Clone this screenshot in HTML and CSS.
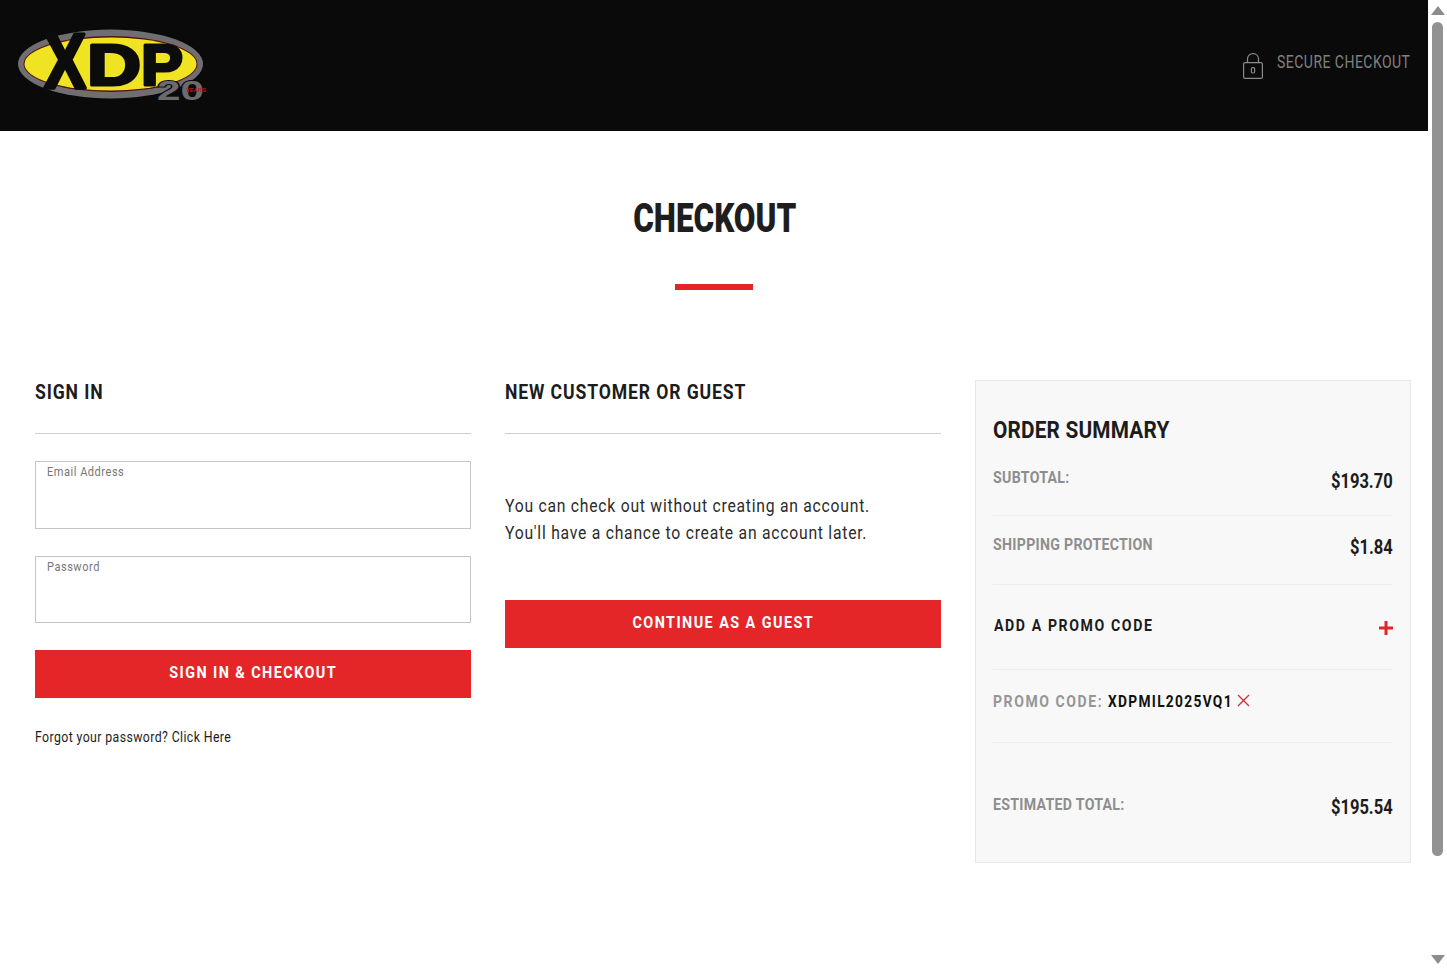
FILE: index.html
```html
<!DOCTYPE html>
<html lang="en">
<head>
<meta charset="utf-8">
<title>Checkout</title>
<link rel="stylesheet" href="styles.css">
</head>
<body>
<div class="window">
  <div class="page">
    <header class="site-header">
      <svg class="logo" width="192" height="76" viewBox="17 26 192 76" role="img" aria-label="XDP 20 years">
        <ellipse cx="110.5" cy="64" rx="92.5" ry="34.5" fill="#6f6f72"/>
        <ellipse cx="110.5" cy="64" rx="87" ry="28" fill="#5a0f12"/>
        <ellipse cx="110.5" cy="64" rx="86" ry="26.5" fill="#efe322"/>
        <text class="logo-x" x="44" y="88" textLength="42" lengthAdjust="spacingAndGlyphs">X</text>
        <text class="logo-dp" x="87" y="85" textLength="54" lengthAdjust="spacingAndGlyphs">D</text>
        <text class="logo-dp" x="141" y="85" textLength="42" lengthAdjust="spacingAndGlyphs">P</text>
        <text class="logo-20" x="157" y="100" textLength="47" lengthAdjust="spacingAndGlyphs">20</text>
        <text class="logo-years" x="186" y="92" textLength="20" lengthAdjust="spacingAndGlyphs">YEARS</text>
      </svg>
      <div class="secure">
        <svg width="20" height="26" viewBox="0 0 20 26" fill="none" stroke="#8a8a8a" stroke-width="1.2" aria-hidden="true">
          <rect x=".6" y="9.6" width="18.8" height="15.8" rx="1.5"/>
          <path d="M4.5 9.5V6C4.5 2.9 6.9.6 10 .6s5.500 2.300 5.500 5.400v3.500"/>
          <rect x="8.400" y="14.600" width="3.200" height="5.400" rx="1.200"/>
        </svg>
        <span class="secure-text">SECURE CHECKOUT</span>
      </div>
    </header>

    <main class="content">
      <div class="title-block">
        <h1 class="title">CHECKOUT</h1>
        <div class="title-rule"></div>
      </div>

      <div class="columns">
        <section class="col">
          <h2 class="col-head"><span>SIGN IN</span></h2>
          <div class="field field-email"><span class="field-label">Email Address</span></div>
          <div class="field field-password"><span class="field-label">Password</span></div>
          <a class="btn btn-signin"><span>SIGN IN &amp; CHECKOUT</span></a>
          <p class="forgot">Forgot your password? Click Here</p>
        </section>

        <section class="col">
          <h2 class="col-head"><span>NEW CUSTOMER OR GUEST</span></h2>
          <p class="guest-copy">You can check out without creating an account.<br>You'll have a chance to create an account later.</p>
          <a class="btn btn-guest"><span>CONTINUE AS A GUEST</span></a>
        </section>

        <aside class="summary">
          <h2 class="summary-title">ORDER SUMMARY</h2>
          <div class="row row-subtotal">
            <span class="row-label">SUBTOTAL:</span><span class="row-value">$193.70</span>
          </div>
          <div class="row row-shipping">
            <span class="row-label">SHIPPING PROTECTION</span><span class="row-value">$1.84</span>
          </div>
          <div class="row row-add">
            <span class="add-label">ADD A PROMO CODE</span>
            <svg class="plus" width="14" height="14" viewBox="0 0 14 14" aria-hidden="true"><path d="M7 0v14M0 7h14" stroke="#e32529" stroke-width="3"/></svg>
          </div>
          <div class="row-promo">
            <span class="promo-label">PROMO CODE:</span>
            <span class="promo-code">XDPMIL2025VQ1</span>
            <svg class="cross" width="13" height="13" viewBox="0 0 13 13" aria-hidden="true"><path d="M1 1l11 11M12 1L1 12" stroke="#c8303a" stroke-width="1.3"/></svg>
          </div>
          <div class="row row-total">
            <span class="row-label">ESTIMATED TOTAL:</span><span class="row-value">$195.54</span>
          </div>
        </aside>
      </div>
    </main>
  </div>

  <div class="scrollbar" aria-hidden="true">
    <span class="arrow-up"></span>
    <span class="thumb"></span>
    <span class="arrow-down"></span>
  </div>
</div>
</body>
</html>
```
FILE: styles.css
```css
* { box-sizing: border-box; }
html, body { margin: 0; height: 100%; }
body {
  background: #fff;
  color: #1c1c1c;
  font-family: "Roboto", "Liberation Sans", sans-serif;
  overflow: hidden;
}
h1, h2, p { margin: 0; font-weight: normal; }

.window { display: flex; height: 970px; }
.page { flex: 1; min-width: 0; }

.site-header {
  height: 131px;
  background: #0a0a0a;
  display: flex;
  align-items: center;
  justify-content: space-between;
  padding: 0 18px 0 17px;
}
.logo { margin-top: -3px; display: block; overflow: visible; }
.logo-x, .logo-dp {
  font-family: "Liberation Sans", sans-serif;
  font-weight: 700;
  fill: #0c0c0c;
  stroke: #0c0c0c;
  stroke-linejoin: round;
}
.logo-x { font-size: 78px; stroke-width: 3.5px; }
.logo-dp { font-size: 58px; stroke-width: 3px; }
.logo-20 {
  font-family: "Liberation Sans", sans-serif;
  font-weight: 700;
  font-size: 28px;
  fill: #6b6b6e;
  stroke: #0a0a0a;
  stroke-width: 2px;
  paint-order: stroke;
}
.logo-years {
  font-family: "Liberation Sans", sans-serif;
  font-weight: 700;
  font-size: 6px;
  fill: #c4161c;
}
.secure {
  display: flex;
  align-items: center;
  color: #808080;
  font-size: 18px;
  letter-spacing: .6px;
}
.secure-text {
  display: inline-block;
  margin: -8px 0 0 -24px;
  transform: scaleX(.778);
  transform-origin: right center;
}

.title-block { display: flex; flex-direction: column; align-items: center; padding-top: 63px; }
.title {
  font-weight: 900;
  font-size: 40px;
  line-height: 50px;
  color: #1e1e1e;
  margin-left: 2px;
  transform: scaleX(.786);
}
.title-rule { width: 78px; height: 6px; background: #e32529; margin-top: 40px; }

.columns {
  display: grid;
  grid-template-columns: 436px 436px 436px;
  column-gap: 34px;
  margin-top: 90px;
  padding-left: 35px;
}
.col-head {
  font-weight: 700;
  font-size: 20px;
  letter-spacing: 1px;
  line-height: 24px;
  color: #1c1c1c;
  border-bottom: 1px solid #cfcfcf;
  height: 54px;
}
.col-head span { display: inline-block; transform: scaleX(.88); transform-origin: left center; }
.field {
  border: 1px solid #c4c4c4;
  padding: 2px 11px;
  font-size: 13px;
  color: #777;
  letter-spacing: .6px;
  line-height: 16px;
}
.field-label { display: inline-block; transform: scaleX(.85); transform-origin: left center; }
.field-email { height: 68px; margin-top: 27px; }
.field-password { height: 67px; margin-top: 27px; }
.btn {
  display: block;
  height: 48px;
  background: #e52629;
  color: #fff;
  font-weight: 700;
  font-size: 17px;
  line-height: 44px;
  letter-spacing: 1.7px;
  text-align: center;
}
.btn span { display: inline-block; transform: scaleX(.847); }
.btn-signin { margin-top: 27px; }
.forgot {
  margin-top: 30px;
  font-size: 14px;
  line-height: 18px;
  letter-spacing: .45px;
  color: #1c1c1c;
  transform: scaleX(.879);
  transform-origin: left center;
}
.guest-copy {
  margin-top: 59px;
  font-size: 17.5px;
  line-height: 27px;
  letter-spacing: .85px;
  color: #2b2b2b;
  transform: scaleX(.897);
  transform-origin: left center;
}
.btn-guest { margin-top: 53px; }

.summary {
  height: 483px;
  background: #f8f8f9;
  border: 1px solid #e8e8e8;
  padding: 33px 17px 0;
}
.summary-title {
  font-weight: 700;
  font-size: 24px;
  line-height: 32px;
  letter-spacing: .2px;
  color: #1c1c1c;
  transform: scaleX(.867);
  transform-origin: left center;
}
.row { display: flex; justify-content: space-between; align-items: flex-start; }
.row-label {
  font-weight: 700;
  font-size: 16.5px;
  line-height: 20px;
  color: #8e8e8e;
  letter-spacing: .35px;
  transform: scaleX(.857);
  transform-origin: left center;
}
.row-value {
  font-weight: 700;
  font-size: 20px;
  line-height: 24px;
  color: #1c1c1c;
  transform: scaleX(.827);
  transform-origin: right center;
}
.row-subtotal { height: 69px; padding-top: 21px; margin-top: 1px; border-bottom: 1px solid #eee; }
.row-subtotal .row-value { margin-top: 1px; }
.row-shipping { height: 69px; padding-top: 19px; border-bottom: 1px solid #eee; }
.row-add { height: 85px; padding: 30px 0 0 1px; border-bottom: 1px solid #eee; }
.add-label {
  font-weight: 700;
  font-size: 17px;
  line-height: 20px;
  letter-spacing: 1.9px;
  color: #1c1c1c;
  transform: scaleX(.832);
  transform-origin: left center;
}
.plus { margin-top: 6px; }
.row-promo { display: flex; align-items: center; height: 73px; padding-bottom: 11px; border-bottom: 1px solid #eee; }
.promo-label {
  font-weight: 700;
  font-size: 17px;
  letter-spacing: 1.9px;
  color: #969696;
  margin-right: -23px;
  transform: scaleX(.826);
  transform-origin: left center;
}
.promo-code {
  font-weight: 700;
  font-size: 17px;
  letter-spacing: 1.6px;
  color: #111;
  margin: 0 -29px 0 4px;
  transform: scaleX(.81);
  transform-origin: left center;
}
.cross { margin-left: 4px; }
.row-total { padding-top: 52px; }

.scrollbar {
  flex: 0 0 19px;
  height: 970px;
  background: #fff;
  display: flex;
  flex-direction: column;
  align-items: center;
  padding-top: 6px;
}
.arrow-up, .arrow-down { width: 0; height: 0; border-left: 7px solid transparent; border-right: 7px solid transparent; }
.arrow-up { border-bottom: 9px solid #8c8c8c; }
.arrow-down { border-top: 9px solid #8c8c8c; margin-top: 99px; }
.thumb { width: 11px; height: 834px; background: #929292; border-radius: 6px; margin-top: 7px; }
```
